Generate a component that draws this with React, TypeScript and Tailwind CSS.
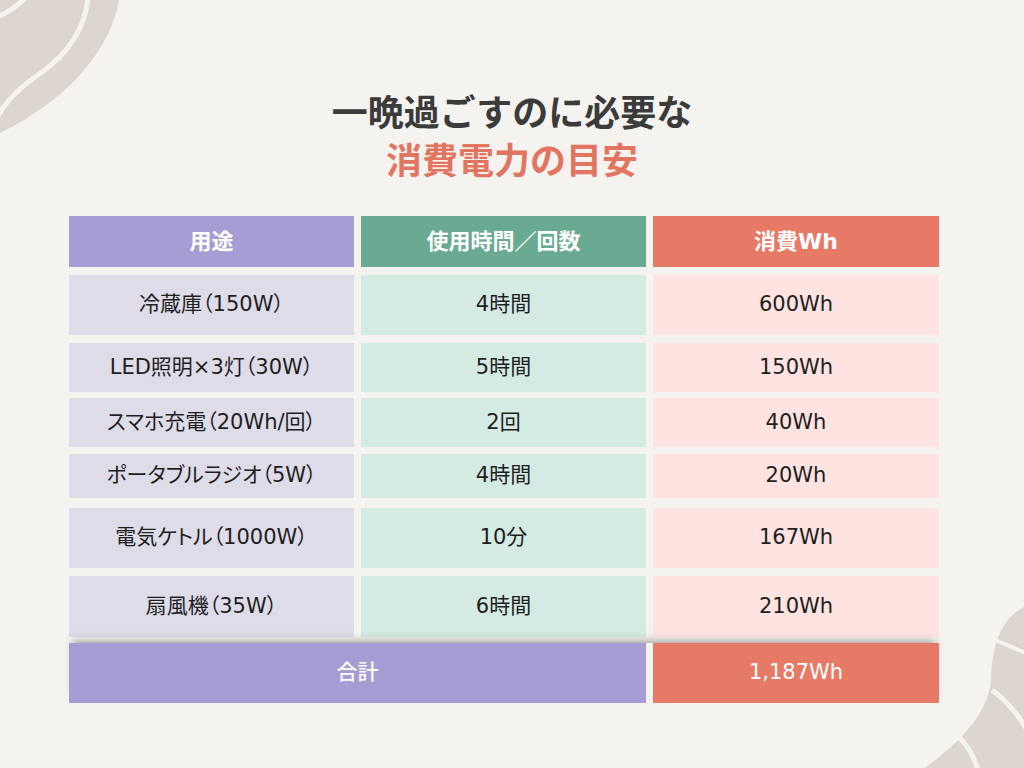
import React from "react";

type Row = { a: string; b: string; c: string; cls: string };

const rows: Row[] = [
  { a: "冷蔵庫（150W）", b: "4時間", c: "600Wh", cls: "mt-[8px] h-[60px]" },
  { a: "LED照明×3灯（30W）", b: "5時間", c: "150Wh", cls: "mt-[8px] h-[49px]" },
  { a: "スマホ充電（20Wh/回）", b: "2回", c: "40Wh", cls: "mt-[6px] h-[49px]" },
  { a: "ポータブルラジオ（5W）", b: "4時間", c: "20Wh", cls: "mt-[7px] h-[44px]" },
  { a: "電気ケトル（1000W）", b: "10分", c: "167Wh", cls: "mt-[10px] h-[60px]" },
  { a: "扇風機（35W）", b: "6時間", c: "210Wh", cls: "mt-[8px] h-[61px]" },
];

export default function App() {
  return (
    <div className="relative w-[1024px] h-[768px] overflow-hidden bg-[#f5f3ef] font-['Noto_Sans_CJK_JP',sans-serif]">
      {/* top-left decoration */}
      <svg className="absolute left-0 top-0" width="130" height="140" viewBox="0 0 130 140">
        <path d="M0,0 L119,0 C112,45 72,98 0,133 Z" fill="#ddd6d0" />
        <path d="M88,-2 C85,30 66,55 42,72 C22,86 8,98 -2,116" fill="none" stroke="#f5f3ef" strokeWidth="5" />
        <path d="M25,-2 C18,6 8,12 -2,17" fill="none" stroke="#f5f3ef" strokeWidth="5" />
      </svg>
      {/* bottom-right decoration */}
      <svg className="absolute right-0 bottom-0" width="110" height="170" viewBox="914 598 110 170">
        <path d="M1026,606 C1004,616 992,640 991,680 C988,715 958,744 922,770 L1026,770 Z" fill="#ddd6d0" />
        <path d="M995,640 C1004,644 1014,648 1026,653" fill="none" stroke="#f5f3ef" strokeWidth="4" />
        <path d="M992,690 C1006,700 1016,712 1026,728" fill="none" stroke="#f5f3ef" strokeWidth="5" />
        <path d="M958,736 C968,746 974,756 978,770" fill="none" stroke="#f5f3ef" strokeWidth="5" />
      </svg>

      <div className="relative flex flex-col">
        <div className="pt-[86px] text-center text-[36px] leading-[48px] font-bold">
          <div className="text-[#3b3b3b]">一晩過ごすのに必要な</div>
          <div className="text-[#e27561]">消費電力の目安</div>
        </div>

        <div className="mt-[34px] ml-[69px] w-[870px] flex flex-col font-['DejaVu_Sans','Noto_Sans_CJK_JP',sans-serif] [font-feature-settings:'palt']">
          <div className="grid grid-cols-[285px_285px_286px] gap-x-[7px] h-[51px] text-white font-bold text-[22px]">
            <div className="bg-[#a59dd3] flex items-center justify-center">用途</div>
            <div className="bg-[#6aaa92] flex items-center justify-center">使用時間／回数</div>
            <div className="bg-[#e67a66] flex items-center justify-center">消費Wh</div>
          </div>

          {rows.map((r) => (
            <div
              key={r.a}
              className={"grid grid-cols-[285px_285px_286px] gap-x-[7px] text-[21px] text-[#1e1e1e] " + r.cls}
            >
              <div className="bg-[#dedce8] flex items-center justify-center">{r.a}</div>
              <div className="bg-[#d3ebe3] flex items-center justify-center">{r.b}</div>
              <div className="bg-[#fee3e1] flex items-center justify-center">{r.c}</div>
            </div>
          ))}

          <div className="relative z-10 mt-[6px] h-[60px] grid grid-cols-[577px_286px] gap-x-[7px] text-white font-medium text-[21px] shadow-[0_-6px_8px_-4px_rgba(0,0,0,0.35)]">
            <div className="bg-[#a59dd3] flex items-center justify-center">合計</div>
            <div className="bg-[#e67a66] flex items-center justify-center">1,187Wh</div>
          </div>
        </div>
      </div>
    </div>
  );
}
